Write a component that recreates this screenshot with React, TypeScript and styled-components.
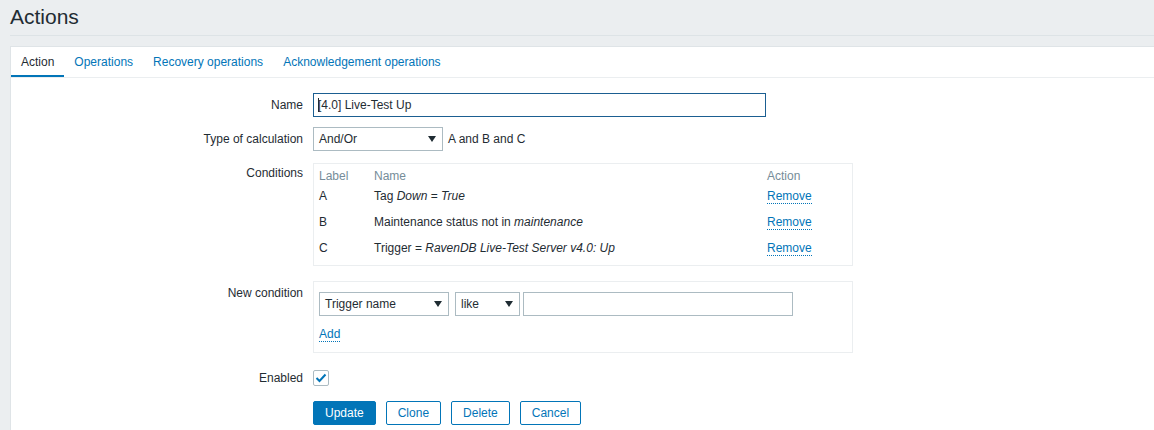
import React from 'react'
import styled, { createGlobalStyle } from 'styled-components'

const GlobalStyle = createGlobalStyle`
    body {
        margin: 0;
        background: #ebeef0;
        font-family: "Liberation Sans", Arial, sans-serif;
        font-size: 12px;
        color: #1f2c33;
    }
`

const conditions = [
    { label: 'A', parts: ['Tag ', <i key='a1'>Down</i>, ' = ', <i key='a2'>True</i>] },
    { label: 'B', parts: ['Maintenance status not in ', <i key='b1'>maintenance</i>] },
    { label: 'C', parts: ['Trigger = ', <i key='c1'>RavenDB Live-Test Server v4.0: Up</i>] },
]

const tabs = ['Action', 'Operations', 'Recovery operations', 'Acknowledgement operations']

const App = () => {
    return (
        <Page>
            <GlobalStyle />
            <Header>
                <Title>Actions</Title>
            </Header>

            <Panel>
                <Tabs>
                    {tabs.map((t, i) => (
                        <Tab key={t} $active={i === 0}>{t}</Tab>
                    ))}
                </Tabs>

                <Form>
                    <Row>
                        <Label>Name</Label>
                        <Field>
                            <TextBox $width={453} $focused>
                                <Caret />[4.0] Live-Test Up
                            </TextBox>
                        </Field>
                    </Row>

                    <Row>
                        <Label>Type of calculation</Label>
                        <Field>
                            <Select $width={130}>
                                And/Or
                                <Arrow />
                            </Select>
                            <Hint>A and B and C</Hint>
                        </Field>
                    </Row>

                    <Row>
                        <Label>Conditions</Label>
                        <Field>
                            <ConditionsBox>
                                <CondTable>
                                    <thead>
                                        <tr>
                                            <HeadCell $width={55}>Label</HeadCell>
                                            <HeadCell>Name</HeadCell>
                                            <HeadCell $width={80}>Action</HeadCell>
                                        </tr>
                                    </thead>
                                    <tbody>
                                        {conditions.map(c => (
                                            <tr key={c.label}>
                                                <Cell>{c.label}</Cell>
                                                <Cell>{c.parts}</Cell>
                                                <Cell><LinkText>Remove</LinkText></Cell>
                                            </tr>
                                        ))}
                                    </tbody>
                                </CondTable>
                            </ConditionsBox>
                        </Field>
                    </Row>

                    <Row>
                        <Label>New condition</Label>
                        <Field>
                            <NewConditionBox>
                                <Controls>
                                    <Select $width={130}>
                                        Trigger name
                                        <Arrow />
                                    </Select>
                                    <Select $width={65} $gap={6}>
                                        like
                                        <Arrow />
                                    </Select>
                                    <TextBox $width={270} $gap={3} />
                                </Controls>
                                <AddRow>
                                    <LinkText>Add</LinkText>
                                </AddRow>
                            </NewConditionBox>
                        </Field>
                    </Row>

                    <Row>
                        <Label>Enabled</Label>
                        <Field>
                            <Checkbox>
                                <svg width='12' height='10' viewBox='0 0 12 10'>
                                    <polyline points='1.5,5 4.5,8 10.5,1.5' fill='none' stroke='#0275b8' strokeWidth='2' />
                                </svg>
                            </Checkbox>
                        </Field>
                    </Row>

                    <ButtonRow>
                        <Label />
                        <Buttons>
                            <Button $primary>Update</Button>
                            <Button>Clone</Button>
                            <Button>Delete</Button>
                            <Button>Cancel</Button>
                        </Buttons>
                    </ButtonRow>
                </Form>
            </Panel>
        </Page>
    )
}

export default App

const Page = styled.div`
    padding-left: 10px;
`
const Header = styled.div`
    height: 35px;
    border-bottom: 1px solid #dde3e6;
`
const Title = styled.h1`
    margin: 0;
    padding-top: 5px;
    font-size: 21px;
    font-weight: normal;
    line-height: 24px;
    color: #1f2c33;
`
const Panel = styled.div`
    margin-top: 10px;
    background: #ffffff;
    border: 1px solid #dfe4e7;
    border-right: none;
`
const Tabs = styled.div`
    display: flex;
    height: 30px;
    border-bottom: 1px solid #ebeef0;
`
const Tab = styled.div<{ $active?: boolean }>`
    display: flex;
    align-items: center;
    padding: 2px 10px 0;
    color: ${p => (p.$active ? '#1f2c33' : '#0275b8')};
    border-bottom: 2px solid ${p => (p.$active ? '#0275b8' : 'transparent')};
    cursor: pointer;
`
const Form = styled.div`
    padding: 10px 0 10px;
`
const Row = styled.div`
    display: grid;
    grid-template-columns: 292px 1fr;
    column-gap: 10px;
    padding: 5px 0;
`
const ButtonRow = styled(Row)`
    padding-top: 6px;
`
const Label = styled.div`
    text-align: right;
    line-height: 24px;
`
const Field = styled.div`
    display: flex;
    align-items: flex-start;
`
const TextBox = styled.div<{ $width: number; $focused?: boolean; $gap?: number }>`
    box-sizing: border-box;
    width: ${p => p.$width}px;
    height: 24px;
    margin-left: ${p => p.$gap ?? 0}px;
    display: flex;
    align-items: center;
    padding: 0 4px;
    border: 1px solid ${p => (p.$focused ? '#1b5e91' : '#acbbc2')};
    background: #ffffff;
`
const Caret = styled.span`
    display: inline-block;
    width: 1px;
    height: 14px;
    background: #1f2c33;
    margin-right: -1px;
`
const Select = styled.div<{ $width: number; $gap?: number }>`
    box-sizing: border-box;
    width: ${p => p.$width}px;
    height: 24px;
    margin-left: ${p => p.$gap ?? 0}px;
    display: flex;
    align-items: center;
    justify-content: space-between;
    padding: 0 6px 0 5px;
    border: 1px solid #acbbc2;
    background: #ffffff;
`
const Arrow = styled.span`
    width: 0;
    height: 0;
    border-left: 4px solid transparent;
    border-right: 4px solid transparent;
    border-top: 6px solid #1f2c33;
`
const Hint = styled.span`
    margin-left: 5px;
    line-height: 24px;
`
const ConditionsBox = styled.div`
    box-sizing: border-box;
    width: 540px;
    margin: 2px 0 5px;
    padding: 5px 5px 4px;
    border: 1px solid #ebeef0;
`
const CondTable = styled.table`
    width: 100%;
    border-collapse: collapse;
`
const HeadCell = styled.th<{ $width?: number }>`
    height: 14px;
    padding: 0;
    text-align: left;
    font-weight: normal;
    color: #768d99;
    width: ${p => (p.$width ? `${p.$width}px` : 'auto')};
`
const Cell = styled.td`
    height: 26px;
    padding: 0;
    vertical-align: middle;
`
const LinkText = styled.span`
    color: #0275b8;
    border-bottom: 1px dotted #0275b8;
    cursor: pointer;
`
const NewConditionBox = styled.div`
    box-sizing: border-box;
    width: 540px;
    margin-bottom: 3px;
    padding: 10px 5px 11px;
    border: 1px solid #ebeef0;
`
const Controls = styled.div`
    display: flex;
`
const AddRow = styled.div`
    margin-top: 11px;
    line-height: 14px;
`
const Checkbox = styled.div`
    box-sizing: border-box;
    width: 16px;
    height: 16px;
    margin-top: 4px;
    border: 1px solid #acbbc2;
    border-radius: 2px;
    display: flex;
    align-items: center;
    justify-content: center;
`
const Buttons = styled.div`
    display: flex;
    gap: 10px;
`
const Button = styled.button<{ $primary?: boolean }>`
    height: 24px;
    padding: 0 11px;
    font-family: inherit;
    font-size: 12px;
    border: 1px solid #0275b8;
    border-radius: 2px;
    background: ${p => (p.$primary ? '#0275b8' : '#ffffff')};
    color: ${p => (p.$primary ? '#ffffff' : '#0275b8')};
    cursor: pointer;
`
